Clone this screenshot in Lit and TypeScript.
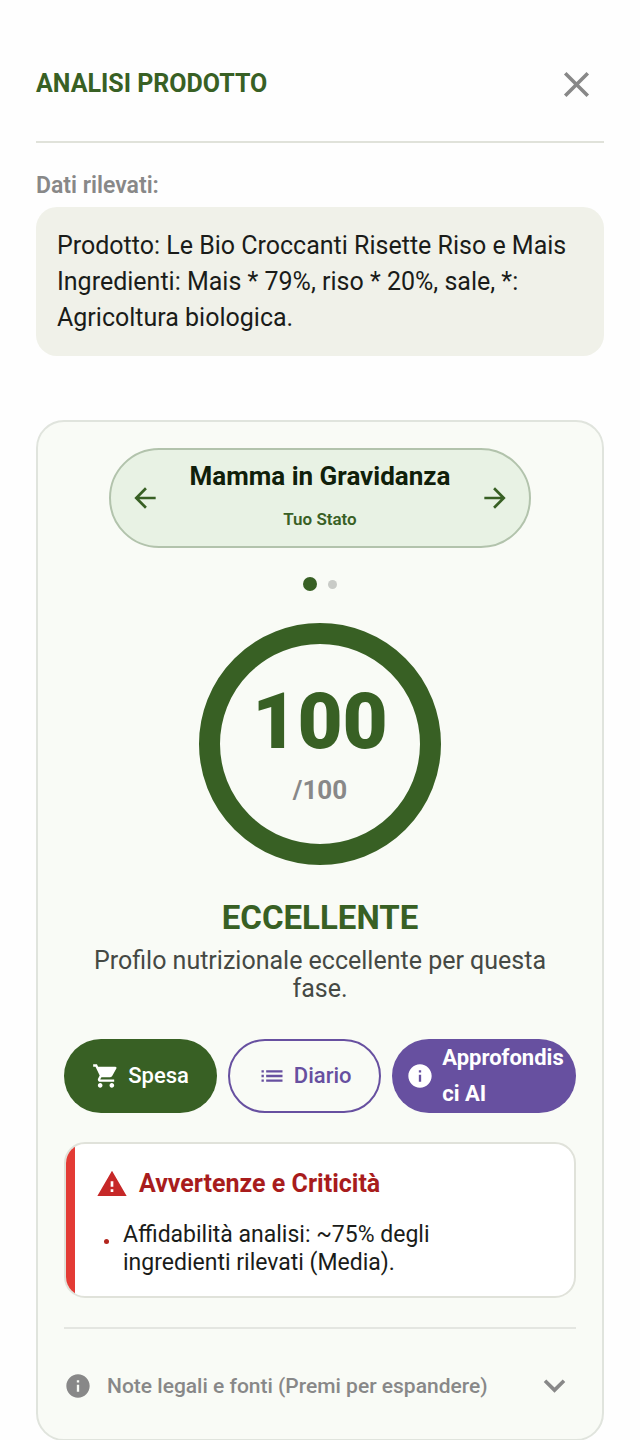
import { LitElement, html, css, svg } from "lit";
import { customElement, property, state } from "lit/decorators.js";
import { classMap } from "lit/directives/class-map.js";

const ICONS: Record<string, string> = {
  close: "M19 6.41 17.59 5 12 10.59 6.41 5 5 6.41 10.59 12 5 17.59 6.41 19 12 13.41 17.59 19 19 17.59 13.41 12z",
  back: "M20 11H7.83l5.59-5.59L12 4l-8 8 8 8 1.41-1.41L7.83 13H20z",
  forward: "m12 4-1.41 1.41L16.17 11H4v2h12.17l-5.58 5.59L12 20l8-8z",
  cart: "M7 18c-1.1 0-1.99.9-1.99 2S5.9 22 7 22s2-.9 2-2-.9-2-2-2zM1 2v2h2l3.6 7.59-1.35 2.45c-.16.28-.25.61-.25.96 0 1.1.9 2 2 2h12v-2H7.42c-.14 0-.25-.11-.25-.25l.03-.12.9-1.63h7.45c.75 0 1.41-.41 1.75-1.03l3.58-6.49A1 1 0 0 0 20 4H5.21l-.94-2zm16 16c-1.1 0-1.99.9-1.99 2s.89 2 1.99 2 2-.9 2-2-.9-2-2-2z",
  list: "M3 13h2v-2H3zm0 4h2v-2H3zm0-8h2V7H3zm4 4h14v-2H7zm0 4h14v-2H7zM7 7v2h14V7z",
  info: "M12 2C6.48 2 2 6.48 2 12s4.48 10 10 10 10-4.48 10-10S17.52 2 12 2zm1 15h-2v-6h2zm0-8h-2V7h2z",
  warning: "M1 21h22L12 2zm12-3h-2v-2h2zm0-4h-2v-4h2z",
  expand: "M7.41 8.59 12 13.17l4.59-4.58L18 10l-6 6-6-6z",
};

@customElement("md-icon-glyph")
class IconGlyph extends LitElement {
  @property() name = "info";

  static styles = css`
    :host {
      display: block;
      flex: none;
      width: var(--icon-size, 28px);
      height: var(--icon-size, 28px);
    }
    .glyph {
      display: block;
      width: 100%;
      height: 100%;
      fill: currentColor;
    }
  `;

  render() {
    return html`<svg class="glyph" viewBox="0 0 24 24" aria-hidden="true">${svg`<path d=${ICONS[this.name]}></path>`}</svg>`;
  }
}

interface Profile {
  name: string;
  note: string;
}

@customElement("app-root")
class AppRoot extends LitElement {
  @state() private current = 0;
  @state() private notesOpen = false;

  private profiles: Profile[] = [
    { name: "Mamma in Gravidanza", note: "Tuo Stato" },
    { name: "Mamma in Gravidanza", note: "Tuo Stato" },
  ];

  private warnings = ["Affidabilità analisi: ~75% degli ingredienti rilevati (Media)."];

  static styles = css`
    :host {
      display: block;
      box-sizing: border-box;
      min-height: 100vh;
      padding: 0 36px;
      background: #fefefe;
      color: #1a1c19;
      font-family: Roboto, "Liberation Sans", sans-serif;
      font-size: 25px;
      --green: #386024;
      --purple: #6750a0;
      --muted: #888888;
      --line: #e0e2da;
    }
    * {
      box-sizing: border-box;
    }
    h1, h2, h3, p, ul {
      margin: 0;
      padding: 0;
    }
    button {
      margin: 0;
      padding: 0;
      border: 0;
      background: none;
      color: inherit;
      font: inherit;
      cursor: pointer;
    }
    .header {
      display: flex;
      align-items: center;
      justify-content: space-between;
      padding: 56px 0 29px;
      border-bottom: 2px solid var(--line);
    }
    .title {
      color: var(--green);
      font-size: 25px;
      line-height: 32px;
      font-weight: 700;
    }
    .close {
      display: grid;
      place-items: center;
      width: 56px;
      height: 56px;
      color: var(--muted);
      --icon-size: 43px;
    }
    .label {
      margin-top: 29px;
      color: var(--muted);
      font-size: 23px;
      line-height: 28px;
      font-weight: 600;
    }
    .detected {
      margin-top: 7px;
      padding: 21px 20px 20px 21px;
      border-radius: 21px;
      background: #f0f1e9;
      font-size: 25px;
      line-height: 36px;
      white-space: pre-line;
    }
    .card {
      margin-top: 64px;
      padding: 26px;
      border: 2px solid #e0e4dd;
      border-radius: 28px;
      background: #f9fbf6;
    }
    .selector {
      display: flex;
      align-items: center;
      justify-content: space-between;
      margin: 0 45px;
      padding: 8px 18px;
      border: 2px solid #b2c3ac;
      border-radius: 50px;
      background: #e8f2e4;
    }
    .step {
      color: var(--green);
      --icon-size: 32px;
    }
    .profile {
      display: grid;
      gap: 11px;
      text-align: center;
    }
    .profile-name {
      color: #10200a;
      font-size: 26px;
      line-height: 36px;
      font-weight: 700;
    }
    .profile-note {
      padding-bottom: 5px;
      color: var(--green);
      font-size: 17px;
      line-height: 28px;
      font-weight: 600;
    }
    .dots {
      display: flex;
      align-items: center;
      justify-content: center;
      gap: 11px;
      height: 14px;
      margin-top: 29px;
    }
    .dot {
      width: 9px;
      height: 9px;
      border-radius: 50%;
      background: #c9cbc7;
    }
    .dot.active {
      width: 14px;
      height: 14px;
      background: var(--green);
    }
    .ring {
      display: flex;
      flex-direction: column;
      align-items: center;
      justify-content: center;
      width: 242px;
      height: 242px;
      margin: 32px auto 0;
      border: 21px solid var(--green);
      border-radius: 50%;
    }
    .score {
      color: var(--green);
      font-size: 78px;
      line-height: 92px;
      font-weight: 900;
    }
    .out-of {
      color: var(--muted);
      font-size: 26px;
      line-height: 44px;
      font-weight: 700;
    }
    .verdict {
      margin-top: 32px;
      color: var(--green);
      font-size: 33px;
      line-height: 42px;
      font-weight: 700;
      text-align: center;
    }
    .summary {
      margin-top: 8px;
      padding: 0 24px;
      color: #454944;
      line-height: 28px;
      text-align: center;
    }
    .actions {
      display: grid;
      grid-template-columns: 5fr 5fr 6fr;
      gap: 11px;
      margin-top: 36px;
    }
    .action {
      display: flex;
      align-items: center;
      justify-content: center;
      gap: 8px;
      min-height: 74px;
      border-radius: 37px;
      font-size: 22px;
      line-height: 36px;
      font-weight: 500;
      text-align: left;
    }
    .primary {
      background: var(--green);
      color: #ffffff;
    }
    .outlined {
      border: 2px solid var(--purple);
      color: var(--purple);
    }
    .accent {
      padding: 0 8px 0 14px;
      background: var(--purple);
      color: #ffffff;
      font-weight: 700;
    }
    .accent-text {
      flex: 1;
      min-width: 0;
      word-break: break-all;
    }
    .alert {
      display: flex;
      margin-top: 29px;
      overflow: hidden;
      border: 2px solid var(--line);
      border-radius: 21px;
      background: #ffffff;
    }
    .stripe {
      flex: none;
      width: 9px;
      background: #e33b35;
    }
    .alert-body {
      flex: 1;
      padding: 24px 21px 19px;
    }
    .alert-head {
      display: flex;
      align-items: center;
      gap: 11px;
      color: #c62828;
      --icon-size: 32px;
    }
    .alert-title {
      color: #a81c1c;
      font-size: 25px;
      line-height: 32px;
      font-weight: 700;
    }
    .warnings {
      display: grid;
      gap: 8px;
      margin-top: 21px;
      list-style: none;
    }
    .warning {
      display: flex;
      gap: 14px;
      padding: 0 80px 0 8px;
      font-size: 23px;
      line-height: 28px;
    }
    .bullet {
      flex: none;
      width: 5px;
      height: 5px;
      margin-top: 18px;
      border-radius: 50%;
      background: #b3261e;
    }
    .legal {
      margin-top: 29px;
      border-top: 2px solid #e4e6e1;
    }
    .legal-toggle {
      display: flex;
      align-items: center;
      gap: 15px;
      width: 100%;
      padding: 35px 0 6px;
      color: var(--muted);
      font-size: 21px;
      line-height: 28px;
      font-weight: 500;
      text-align: left;
    }
    .legal-label {
      flex: 1;
    }
    .expand {
      --icon-size: 43px;
    }
    .expand.open {
      transform: rotate(180deg);
    }
  `;

  private move(step: number) {
    const count = this.profiles.length;
    this.current = (this.current + step + count) % count;
  }

  render() {
    const profile = this.profiles[this.current];
    return html`
      <header class="header">
        <h1 class="title">ANALISI PRODOTTO</h1>
        <button class="close" aria-label="Chiudi"><md-icon-glyph name="close"></md-icon-glyph></button>
      </header>

      <h2 class="label">Dati rilevati:</h2>
      <p class="detected">${"Prodotto: Le Bio Croccanti Risette Riso e Mais\nIngredienti: Mais * 79%, riso * 20%, sale, *: Agricoltura biologica."}</p>

      <main class="card">
        <div class="selector">
          <button class="step" aria-label="Precedente" @click=${() => this.move(-1)}>
            <md-icon-glyph name="back"></md-icon-glyph>
          </button>
          <div class="profile">
            <div class="profile-name">${profile.name}</div>
            <div class="profile-note">${profile.note}</div>
          </div>
          <button class="step" aria-label="Successivo" @click=${() => this.move(1)}>
            <md-icon-glyph name="forward"></md-icon-glyph>
          </button>
        </div>

        <div class="dots">
          ${this.profiles.map((_, i) => html`<span class=${classMap({ dot: true, active: i === this.current })}></span>`)}
        </div>

        <div class="ring">
          <div class="score">100</div>
          <div class="out-of">/100</div>
        </div>

        <h2 class="verdict">ECCELLENTE</h2>
        <p class="summary">Profilo nutrizionale eccellente per questa fase.</p>

        <div class="actions">
          <button class="action primary"><md-icon-glyph name="cart"></md-icon-glyph><span>Spesa</span></button>
          <button class="action outlined"><md-icon-glyph name="list"></md-icon-glyph><span>Diario</span></button>
          <button class="action accent">
            <md-icon-glyph name="info"></md-icon-glyph><span class="accent-text">Approfondisci AI</span>
          </button>
        </div>

        <section class="alert">
          <div class="stripe"></div>
          <div class="alert-body">
            <div class="alert-head">
              <md-icon-glyph name="warning"></md-icon-glyph>
              <h3 class="alert-title">Avvertenze e Criticità</h3>
            </div>
            <ul class="warnings">
              ${this.warnings.map((text) => html`<li class="warning"><span class="bullet"></span><span>${text}</span></li>`)}
            </ul>
          </div>
        </section>

        <div class="legal">
          <button
            class="legal-toggle"
            aria-expanded=${this.notesOpen ? "true" : "false"}
            @click=${() => (this.notesOpen = !this.notesOpen)}
          >
            <md-icon-glyph name="info"></md-icon-glyph>
            <span class="legal-label">Note legali e fonti (Premi per espandere)</span>
            <md-icon-glyph class=${classMap({ expand: true, open: this.notesOpen })} name="expand"></md-icon-glyph>
          </button>
        </div>
      </main>
    `;
  }
}
